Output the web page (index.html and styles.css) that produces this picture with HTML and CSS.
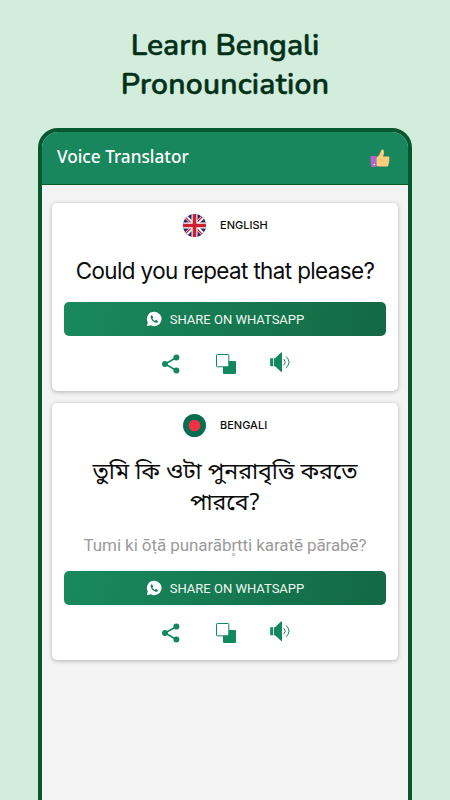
FILE: index.html
```html
<!DOCTYPE html>
<html lang="en">
<head>
<meta charset="utf-8">
<title>Voice Translator</title>
<link rel="stylesheet" href="styles.css">
</head>
<body>
<svg class="defs" aria-hidden="true">
  <symbol id="whatsapp" viewBox="0 0 16 16"><path fill="#fff" d="M8.2.7a7.2 7.2 0 1 1-3.4 13.5L.8 15.300l1-3.900A7.200 7.200 0 0 1 8.200.7z"/><path fill="#167d55" d="M5.800 4.300c-.8.4-1.300 1.200-1.100 2.200.5 2.500 2.500 4.600 5 5.200 1.100.2 2-.4 2.200-1.300.1-.4 0-.5-.3-.7L10.200 9c-.3-.1-.5 0-.7.2l-.5.7C7.800 9.500 6.900 8.600 6.400 7.500l.5-.6c.2-.2.1-.4.1-.6l-.7-1.700c-.1-.2-.2-.3-.5-.3z"/></symbol>
  <symbol id="share" viewBox="0 0 18 20"><path d="M14.500 3.500 3 10l11.500 6.500" fill="none" stroke="#11895c" stroke-width="1.600"/><g fill="#11895c"><circle cx="14.400" cy="3.400" r="3"/><circle cx="3" cy="10" r="3"/><circle cx="14.400" cy="16.600" r="3"/></g></symbol>
  <symbol id="copy" viewBox="0 0 20 20"><path fill="#11895c" d="M8 7h11q1 0 1 1v11q0 1-1 1H8q-1 0-1-1V8z"/><rect x=".5" y=".5" width="12.300" height="12.300" rx=".8" fill="#fff" stroke="#11895c"/></symbol>
  <symbol id="speaker" viewBox="0 0 20 20"><path fill="#11895c" d="M.2 6.200h3v8h-3zM4 6.200h1L11 .4q1-.6 1 .6v18.400q0 1.100-1 .4l-6-5.600H4z"/><g fill="none" stroke="#11895c"><path d="M13.800 7.200q3 3 0 6" stroke-width="1"/><path d="M16.200 4.500q5.600 5.600 0 11.300" stroke-width="1"/></g></symbol>
</svg>
<main class="page">
  <h1 class="headline"><span class="line-one">Learn Bengali</span><span class="line-two">Pronounciation</span></h1>
  <section class="phone">
    <header class="bar">
      <span class="title">Voice Translator</span>
      <svg class="thumb" viewBox="0 0 20 19"><path fill="#b765ce" d="M.5 7h6v11H2.200Q1 18 1 16.800z"/><circle cx="4.300" cy="15.500" r=".8" fill="#fff"/><path fill="#ffcb7c" d="M6.500 8.500Q10 6.500 10.800 2.500q.5-2.600 2.100-1.900 1.700.8.700 4.900l-.4 2h5q1.500 0 1.300 1.300-.1.900-.7 1.200.8.400.7 1.300-.1.900-.8 1.200.6.500.4 1.300-.2.900-.9 1.100.5.500.3 1.300-.3 1.200-1.800 1.200H8.500q-1.200 0-2-.6z"/></svg>
    </header>
    <article class="card">
      <div class="language">
        <svg class="flag" viewBox="0 0 24 24"><defs><clipPath id="round"><circle cx="12" cy="12" r="12"/></clipPath></defs><g clip-path="url(#round)"><path fill="#252568" d="M0 0h24v24H0z"/><path stroke="#fff" stroke-width="4" d="m0 0 24 24M24 0 0 24"/><path stroke="#d62335" stroke-width="1.400" d="m0 1 24 24M23 0-1 24"/><path stroke="#fff" stroke-width="6.200" d="M12 0v24M0 12h24"/><path stroke="#cc2031" stroke-width="3.800" d="M12 0v24M0 12h24"/></g></svg>
        <span>ENGLISH</span>
      </div>
      <p class="phrase english">Could you repeat that please?</p>
      <div class="button"><svg><use href="#whatsapp"/></svg><span>SHARE ON WHATSAPP</span></div>
      <div class="actions"><svg class="share"><use href="#share"/></svg><svg class="copy"><use href="#copy"/></svg><svg class="speaker"><use href="#speaker"/></svg></div>
    </article>
    <article class="card">
      <div class="language">
        <svg class="flag" viewBox="0 0 24 24"><circle cx="12" cy="12" r="12" fill="#066d50"/><circle cx="12" cy="12" r="6.100" fill="#f33144"/></svg>
        <span>BENGALI</span>
      </div>
      <p class="phrase bengali" lang="bn">তুমি কি ওটা পুনরাবৃত্তি করতে<br>পারবে?</p>
      <p class="roman">Tumi ki ōṭā punarābr̥tti karatē pārabē?</p>
      <div class="button"><svg><use href="#whatsapp"/></svg><span>SHARE ON WHATSAPP</span></div>
      <div class="actions"><svg class="share"><use href="#share"/></svg><svg class="copy"><use href="#copy"/></svg><svg class="speaker"><use href="#speaker"/></svg></div>
    </article>
  </section>
</main>
</body>
</html>
```
FILE: styles.css
```css
* { box-sizing: border-box; }
body { margin: 0; background: #d2eddb; overflow: hidden; font-family: Inter, "Liberation Sans", sans-serif; color: #0b0c0c; }
h1, p { margin: 0; font-weight: 400; }
svg { display: block; flex: none; }
.defs { display: none; }
.page { width: 450px; height: 800px; overflow: hidden; display: flex; flex-direction: column; align-items: center; }
.headline { height: 128px; padding-top: 26px; font: 600 30px/39px Nunito, "Open Sans", sans-serif; color: #033019; text-align: center; -webkit-text-stroke: .5px #033019; flex: none; }
.headline span { display: block; white-space: nowrap; }
.line-one { letter-spacing: -.05px; }
.line-two { letter-spacing: .2px; }
.phone { width: 374px; height: 700px; flex: none; border: 4px solid #07572f; border-radius: 20px; background: #f3f3f3; overflow: hidden; display: flex; flex-direction: column; align-items: center; }
.bar { width: 100%; height: 53px; margin-bottom: 18px; padding: 0 18px 0 15px; display: flex; align-items: center; justify-content: space-between; background: #19875d; border-bottom: 1px solid #075c29; color: #fff; font: 500 17.2px/24px "Noto Sans", sans-serif; flex: none; }
.title { position: relative; top: -1px; }
.thumb { width: 20px; height: 19px; }
.card { width: 346px; height: 188px; margin-bottom: 12px; padding: 0 12px; border-radius: 5px; background: #fff; box-shadow: 0 1px 4px #0004; flex: none; display: flex; flex-direction: column; }
.card + .card { height: 257px; }
.language { height: 45px; padding-left: 119px; display: flex; align-items: center; gap: 14px; font-size: 11px; font-weight: 500; }
.language span { padding-bottom: 1px; }
.flag { width: 23px; height: 23px; }
.phrase { text-align: center; white-space: nowrap; }
.english { height: 54px; font-size: 22.4px; line-height: 46px; letter-spacing: -.6px; }
.bengali { height: 84px; padding-top: 10px; font: 23.1px/31px "Noto Sans Bengali", "Noto Sans", sans-serif; }
.roman { height: 39px; text-align: center; color: #9b9b9b; font: 17px/27px Roboto, "Liberation Sans", sans-serif; letter-spacing: -.08px; white-space: nowrap; }
.button { height: 34px; border-radius: 5px; display: flex; align-items: center; justify-content: center; gap: 8px; background: linear-gradient(100deg, #19895e, #136944); color: #eff8f3; font: 13px/18px Roboto, sans-serif; flex: none; }
.button span { padding-top: 1px; }
.button svg { width: 16px; height: 16px; }
.actions { height: 55px; display: flex; align-items: center; padding-left: 98px; }
.share { width: 18px; height: 20px; margin-right: 36px; }
.copy { width: 20px; height: 20px; margin-right: 34px; }
.speaker { width: 20px; height: 20px; margin-bottom: 3px; }
```
